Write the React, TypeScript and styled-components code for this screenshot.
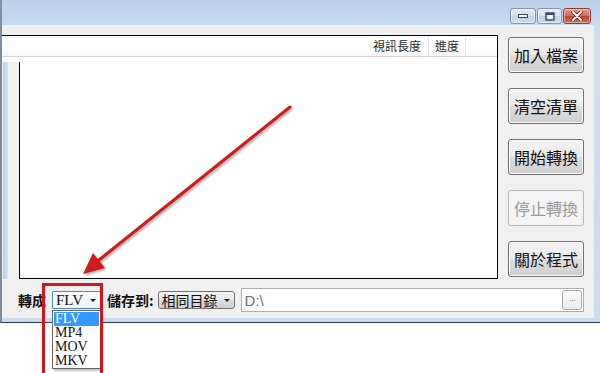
import React from 'react';
import styled, { createGlobalStyle } from 'styled-components';

const GlobalStyle = createGlobalStyle`
  html, body {
    margin: 0;
    padding: 0;
    background: #ffffff;
  }
  body {
    width: 600px;
    height: 373px;
    overflow: hidden;
    font-family: 'Noto Sans CJK TC', 'Noto Sans', sans-serif;
  }
`;

const Page = styled.div`
  position: relative;
  width: 600px;
  height: 373px;
  background: #ffffff;
  overflow: hidden;
`;

const Window = styled.div`
  display: flex;
  flex-direction: column;
  width: 600px;
  height: 323px;
  box-sizing: border-box;
  background: linear-gradient(#bcd1e9, #d0e0f1 40px, #c8daee);
  border-left: 2px solid #808d9b;
  border-bottom: 1px solid #2d3a48;
`;

const TitleBar = styled.div`
  height: 25px;
  flex-shrink: 0;
  display: flex;
  justify-content: flex-end;
  align-items: flex-start;
  padding: 8px 9px 0 0;
  box-sizing: border-box;
`;

const CaptionGroup = styled.div`
  display: flex;
  gap: 1px;
`;

const CaptionButton = styled.div<{ $width: number; $close?: boolean }>`
  width: ${({ $width }) => $width}px;
  height: 16px;
  box-sizing: border-box;
  display: flex;
  align-items: center;
  justify-content: center;
  border: 1px solid ${({ $close }) => ($close ? '#8a3b33' : '#8396ad')};
  border-radius: 3px;
  background: ${({ $close }) =>
    $close
      ? 'linear-gradient(#e3a093, #d0695a 50%, #c1422f 51%, #d0705d)'
      : 'linear-gradient(#e3ebf5, #d3e0ee 50%, #c2d3e7 51%, #cddcec)'};
  box-shadow: inset 0 0 0 1px rgba(255, 255, 255, 0.45);
`;

const Client = styled.div`
  flex: 1;
  display: flex;
  flex-direction: column;
  margin: 0 6px 4px 0;
  padding: 10px 10px 6px 0;
  background: #f0f0f0;
  box-sizing: border-box;
`;

const MainRow = styled.div`
  display: flex;
  height: 244px;
  gap: 10px;
`;

const ListPanel = styled.div`
  flex: 1;
  display: flex;
  flex-direction: column;
  border-top: 1px solid #000;
  border-right: 1px solid #000;
`;

const ListHeader = styled.div`
  height: 20px;
  flex-shrink: 0;
  display: flex;
  justify-content: flex-end;
  padding-right: 31px;
  background: linear-gradient(#ffffff, #ffffff 60%, #f5f6f7);
  border-bottom: 1px solid #d5d5d5;
`;

const HeaderCell = styled.div<{ $padLeft: number; $padRight: number }>`
  display: flex;
  align-items: center;
  padding: 0 ${({ $padRight }) => $padRight}px 0 ${({ $padLeft }) => $padLeft}px;
  border-right: 1px solid #e3e6ea;
  font-size: 12px;
  line-height: 12px;
  color: #2a2a2a;
`;

const HeaderGap = styled.div`
  height: 5px;
  flex-shrink: 0;
  background: #ffffff;
`;

const ListBody = styled.div`
  flex: 1;
  display: flex;
`;

const Gutter = styled.div`
  width: 17px;
  position: relative;

  &::before {
    content: '';
    position: absolute;
    left: 1px;
    top: 0;
    bottom: 0;
    width: 5px;
    background: linear-gradient(90deg, #b6d0ea, #d3e3f3);
  }
`;

const ListArea = styled.div`
  flex: 1;
  background: #ffffff;
  border-left: 1px solid #000;
  border-bottom: 1px solid #000;
`;

const ButtonColumn = styled.div`
  width: 76px;
  display: flex;
  flex-direction: column;
  gap: 15px;
  padding-top: 2px;
`;

const ActionButton = styled.div<{ $disabled?: boolean }>`
  height: 36px;
  box-sizing: border-box;
  display: flex;
  align-items: center;
  justify-content: center;
  border-radius: 3px;
  font-size: 16px;
  border: 1px solid ${({ $disabled }) => ($disabled ? '#b5b9bc' : '#707070')};
  color: ${({ $disabled }) => ($disabled ? '#9a9a9a' : '#111111')};
  background: ${({ $disabled }) =>
    $disabled ? '#f4f4f4' : 'linear-gradient(#f2f2f2, #ebebeb 50%, #dddddd 51%, #cfcfcf)'};
  box-shadow: inset 0 0 0 1px ${({ $disabled }) => ($disabled ? '#f4f4f4' : '#fbfbfb')};
`;

const BottomRow = styled.div`
  display: flex;
  align-items: center;
  height: 24px;
  margin-top: 9px;
  padding-left: 16px;
`;

const FieldLabel = styled.span<{ $gap: number }>`
  font-size: 14px;
  font-weight: 700;
  color: #111;
  margin-right: ${({ $gap }) => $gap}px;
  white-space: nowrap;
`;

const SelectBox = styled.div<{ $width: number; $focused?: boolean; $serif?: boolean; $gap: number }>`
  width: ${({ $width }) => $width}px;
  height: 18px;
  box-sizing: border-box;
  display: flex;
  align-items: center;
  justify-content: space-between;
  padding: 0 4px 0 3px;
  margin-right: ${({ $gap }) => $gap}px;
  border: 1px solid ${({ $focused }) => ($focused ? '#4a86c1' : '#707070')};
  border-radius: ${({ $focused }) => ($focused ? '1px' : '3px')};
  background: ${({ $focused }) =>
    $focused ? 'linear-gradient(#fbfdff, #eef5fb)' : 'linear-gradient(#f4f4f4, #e6e6e6 50%, #dadada 51%, #d2d2d2)'};
  font-family: ${({ $serif }) =>
    $serif ? "'Liberation Serif', serif" : "'Noto Sans CJK TC', sans-serif"};
  font-size: ${({ $serif }) => ($serif ? 15 : 14)}px;
  color: #111;
`;

const Caret = styled.span`
  width: 0;
  height: 0;
  border-left: 3px solid transparent;
  border-right: 3px solid transparent;
  border-top: 3px solid #222;
`;

const PathField = styled.div`
  flex: 1;
  height: 24px;
  box-sizing: border-box;
  display: flex;
  align-items: center;
  justify-content: space-between;
  padding: 0 1px 0 3px;
  border: 1px solid #abadb3;
  background: #ffffff;
  font-family: 'Liberation Sans', 'Noto Sans', sans-serif;
  font-size: 15px;
  color: #6d6d6d;
`;

const BrowseButton = styled.div`
  width: 20px;
  height: 20px;
  box-sizing: border-box;
  display: flex;
  align-items: center;
  justify-content: center;
  border: 1px solid #a9a9a9;
  border-radius: 3px;
  background: linear-gradient(#f9f9f9, #ececec);
  font-size: 9px;
  letter-spacing: -1px;
  color: #8a8a8a;
`;

const Dropdown = styled.div`
  position: absolute;
  left: 52px;
  top: 310px;
  width: 49px;
  box-sizing: border-box;
  padding: 1px 1px 0;
  border: 1px solid #646464;
  background: #ffffff;
  box-shadow: 2px 2px 2px rgba(0, 0, 0, 0.25);
`;

const DropdownItem = styled.div<{ $active?: boolean }>`
  height: 14px;
  line-height: 14px;
  padding-left: 1px;
  font-family: 'Liberation Serif', serif;
  font-size: 14px;
  color: ${({ $active }) => ($active ? '#ffffff' : '#111111')};
  background: ${({ $active }) => ($active ? '#3399ff' : 'transparent')};
`;

const Highlight = styled.div`
  position: absolute;
  left: 42px;
  top: 283px;
  width: 61px;
  height: 100px;
  box-sizing: border-box;
  border: 3px solid #d3141c;
`;

const Overlay = styled.svg`
  position: absolute;
  left: 0;
  top: 0;
  pointer-events: none;
`;

const MinimizeGlyph = () => (
  <svg width="10" height="6" viewBox="0 0 10 6">
    <rect x="0.5" y="1.5" width="9" height="3" fill="#ffffff" stroke="#39495c" />
  </svg>
);

const MaximizeGlyph = () => (
  <svg width="10" height="9" viewBox="0 0 10 9">
    <rect x="1" y="1" width="8" height="7" fill="none" stroke="#39495c" strokeWidth="1.4" />
    <rect x="1" y="1" width="8" height="2" fill="#39495c" />
    <rect x="2.5" y="3.5" width="5" height="3" fill="#ffffff" />
  </svg>
);

const CloseGlyph = () => (
  <svg width="12" height="10" viewBox="0 0 12 10">
    <path d="M2 1 L10 9 M10 1 L2 9" stroke="#5a1c14" strokeWidth="3.4" strokeLinecap="round" />
    <path d="M2 1 L10 9 M10 1 L2 9" stroke="#ffffff" strokeWidth="2" strokeLinecap="round" />
  </svg>
);

const actions = [
  { label: '加入檔案' },
  { label: '清空清單' },
  { label: '開始轉換' },
  { label: '停止轉換', disabled: true },
  { label: '關於程式' },
];

const formats = ['FLV', 'MP4', 'MOV', 'MKV'];

export default function App() {
  return (
    <Page>
      <GlobalStyle />
      <Window>
        <TitleBar>
          <CaptionGroup>
            <CaptionButton $width={26}>
              <MinimizeGlyph />
            </CaptionButton>
            <CaptionButton $width={25}>
              <MaximizeGlyph />
            </CaptionButton>
            <CaptionButton $width={28} $close>
              <CloseGlyph />
            </CaptionButton>
          </CaptionGroup>
        </TitleBar>
        <Client>
          <MainRow>
            <ListPanel>
              <ListHeader>
                <HeaderCell $padLeft={7} $padRight={7}>視訊長度</HeaderCell>
                <HeaderCell $padLeft={6} $padRight={6}>進度</HeaderCell>
              </ListHeader>
              <HeaderGap />
              <ListBody>
                <Gutter />
                <ListArea />
              </ListBody>
            </ListPanel>
            <ButtonColumn>
              {actions.map((a) => (
                <ActionButton key={a.label} $disabled={a.disabled}>
                  {a.label}
                </ActionButton>
              ))}
            </ButtonColumn>
          </MainRow>
          <BottomRow>
            <FieldLabel $gap={6}>轉成</FieldLabel>
            <SelectBox $width={49} $focused $serif $gap={6}>
              <span>FLV</span>
              <Caret />
            </SelectBox>
            <FieldLabel $gap={4}>儲存到:</FieldLabel>
            <SelectBox $width={77} $gap={6}>
              <span>相同目錄</span>
              <Caret />
            </SelectBox>
            <PathField>
              <span>D:\</span>
              <BrowseButton>···</BrowseButton>
            </PathField>
          </BottomRow>
        </Client>
      </Window>

      <Dropdown>
        {formats.map((f, i) => (
          <DropdownItem key={f} $active={i === 0}>
            {f}
          </DropdownItem>
        ))}
      </Dropdown>

      <Highlight />

      <Overlay width="600" height="373" viewBox="0 0 600 373">
        <defs>
          <filter id="arrowShadow" x="-20%" y="-20%" width="140%" height="140%">
            <feDropShadow dx="1.5" dy="1.5" stdDeviation="1.2" floodColor="#000" floodOpacity="0.35" />
          </filter>
        </defs>
        <g filter="url(#arrowShadow)">
          <line x1="290" y1="107" x2="99" y2="260" stroke="#cc1a1a" strokeWidth="3" strokeLinecap="round" />
          <polygon points="83,274 105,268 93,253" fill="#cc1a1a" />
        </g>
      </Overlay>
    </Page>
  );
}
